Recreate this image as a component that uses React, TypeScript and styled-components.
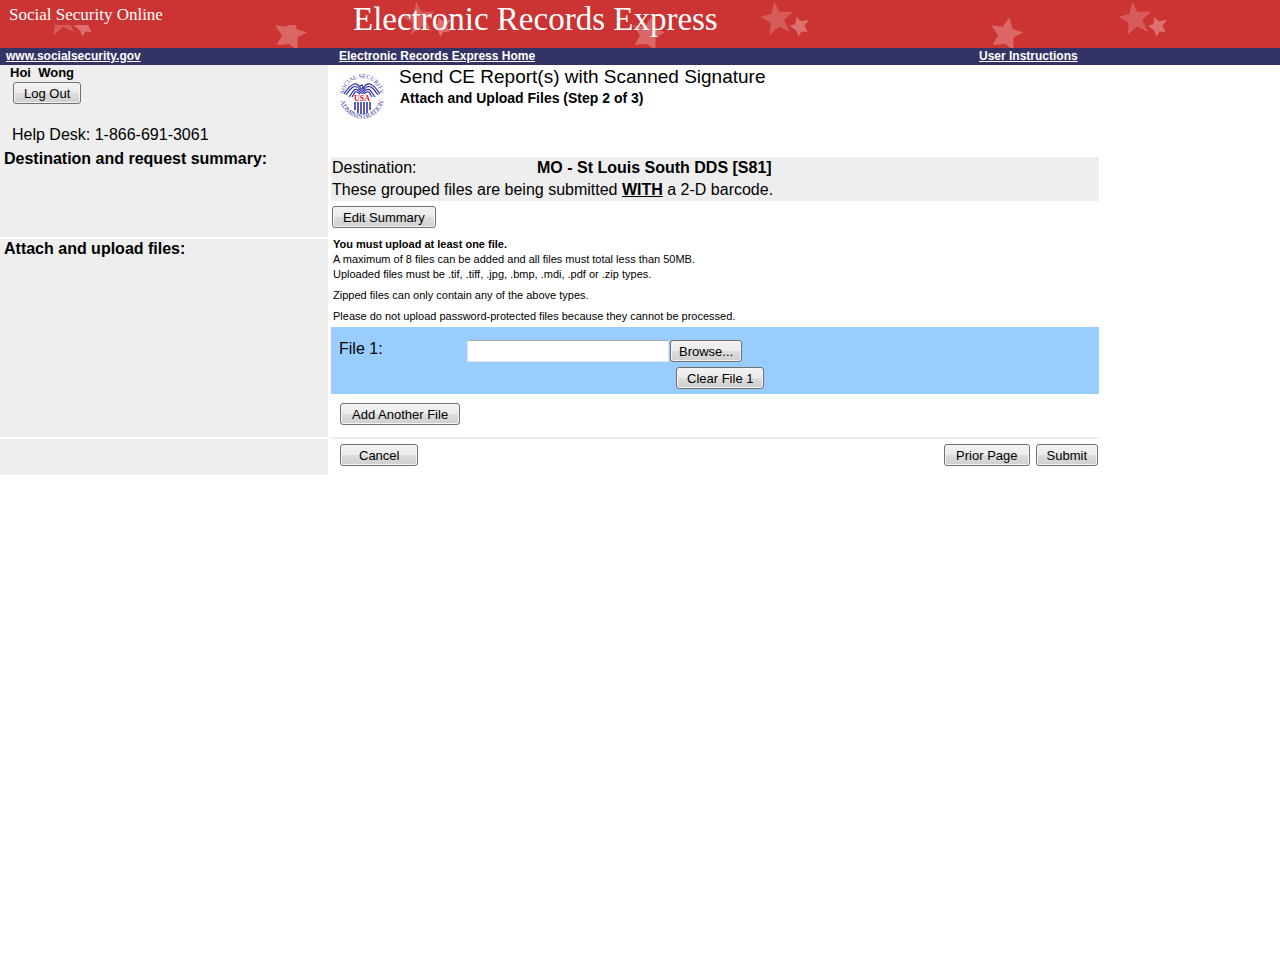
import React from "react";
import styled, { createGlobalStyle } from "styled-components";

const GlobalStyle = createGlobalStyle`
  * { box-sizing: border-box; }
  body {
    margin: 0;
    background: #ffffff;
    color: #000000;
    font-family: Arial, "Liberation Sans", sans-serif;
    font-size: 16px;
    line-height: 22px;
  }
  h1, h2, h3, p, dl, dd { margin: 0; }
`;

const Banner = styled.header`
  display: grid;
  grid-template-columns: 344px 1fr;
  align-items: start;
  height: 48px;
  background: #cc3333;
  color: #ffffff;
  font-family: Georgia, "Liberation Serif", serif;
`;

const StarField = styled.svg`
  grid-area: 1 / 1 / 2 / 3;
  width: 100%;
  height: 48px;
`;

const SiteName = styled.p`
  grid-area: 1 / 1;
  height: 25px;
  padding: 4px 0 0 9px;
  background: #cc3333;
  font-size: 17px;
  line-height: 21px;
`;

const AppName = styled.h1`
  grid-area: 1 / 2;
  padding-left: 9px;
  font-size: 33px;
  font-weight: 400;
  line-height: 39px;
`;

const NavBar = styled.nav`
  display: grid;
  grid-template-columns: 339px 640px 1fr;
  height: 17px;
  background: #333366;
  font-size: 12px;
  font-weight: 700;
  line-height: 16px;
`;

const NavLink = styled.a<{ $inset?: boolean }>`
  justify-self: start;
  margin-left: ${(p) => (p.$inset ? 6 : 0)}px;
  color: #ffffff;
`;

const Row = styled.section<{ $height: number }>`
  display: grid;
  grid-template-columns: 328px minmax(0, 60%);
  column-gap: 3px;
  min-height: ${(p) => p.$height}px;
`;

const Side = styled.div<{ $last?: boolean }>`
  background: #eeeeee;
  border-bottom: ${(p) => (p.$last ? 0 : 2)}px solid #ffffff;
`;

const SideHeading = styled.h3`
  padding-left: 4px;
  font-size: 16px;
  line-height: 20px;
`;

const Account = styled.div`
  display: flex;
  flex-direction: column;
  align-items: flex-start;
  height: 84px;
  padding: 0 0 3px 13px;
`;

const UserName = styled.p`
  margin: 0 0 1px -3px;
  font-size: 13px;
  font-weight: 700;
  line-height: 16px;
  white-space: pre;
`;

const HelpDesk = styled.p`
  margin: auto 0 0 -1px;
`;

const Main = styled.div<{ $ruled?: boolean }>`
  border-bottom: ${(p) => (p.$ruled ? 2 : 0)}px solid #eeeeee;
`;

const TitleBlock = styled.div`
  display: flex;
  gap: 14px;
  height: 92px;
  padding-left: 8px;
`;

const Seal = styled.svg`
  width: 46px;
  height: 48px;
  margin-top: 7px;
`;

const PageTitle = styled.h2`
  font-size: 19px;
  font-weight: 400;
  line-height: 24px;
`;

const StepTitle = styled.h3`
  padding-left: 1px;
  font-size: 14px;
  line-height: 18px;
`;

const Summary = styled.div`
  margin-bottom: 5px;
  padding-left: 1px;
  background: #eeeeee;
`;

const Destination = styled.dl`
  display: grid;
  grid-template-columns: 205px 1fr;
`;

const DestinationValue = styled.dd`
  font-weight: 700;
`;

const Emphasis = styled.strong`
  text-decoration: underline;
`;

const Button = styled.button<{ $pad?: number }>`
  height: 22px;
  padding: 1px ${(p) => p.$pad ?? 10}px 0;
  border: 1px solid #707070;
  border-radius: 3px;
  background: linear-gradient(#f2f2f2 0%, #ebebeb 50%, #dddddd 50%, #cfcfcf 100%);
  box-shadow: inset 0 0 0 1px #f4f4f4;
  color: #000000;
  font-family: inherit;
  font-size: 13px;
  line-height: 19px;
`;

const Indent = styled.div<{ $by: number }>`
  display: flex;
  padding-left: ${(p) => p.$by}px;
`;

const Rules = styled.div`
  display: flex;
  flex-direction: column;
  height: 88px;
  padding-left: 2px;
  font-size: 11px;
  line-height: 15px;
`;

const Rule = styled.p<{ $spaced?: boolean }>`
  margin-top: ${(p) => (p.$spaced ? 6 : 0)}px;
`;

const Notice = styled(Rule)`
  margin-bottom: 3px;
  line-height: 10px;
  font-weight: 700;
`;

const FilePanel = styled.div`
  display: grid;
  grid-template-columns: 128px 1fr;
  height: 67px;
  margin-bottom: 9px;
  padding: 13px 8px 0;
  background: #99ccff;
`;

const FileLabel = styled.label`
  line-height: 18px;
`;

const FileControls = styled.div`
  display: flex;
  flex-direction: column;
  gap: 5px;
`;

const FilePicker = styled.div`
  display: flex;
  gap: 1px;
`;

const FileBox = styled.input`
  width: 202px;
  height: 22px;
  padding: 1px 3px;
  border: 1px solid #e2e3ea;
  border-top-color: #abadb3;
  background: #ffffff;
  font: inherit;
  font-size: 13px;
`;

const Actions = styled.div`
  display: flex;
  gap: 6px;
  padding: 5px 1px 0 9px;
`;

const Spacer = styled.span`
  flex: 1;
`;

function Stars() {
  return (
    <StarField aria-hidden="true">
      <defs>
        <pattern id="stars" x="14" y="0" width="358" height="48" patternUnits="userSpaceOnUse">
          <g transform="scale(0.33333)">
            <path fill="#d65c5c" d="M133 5L148 35L189 35L162 61L180 95L147 80L118 105L123 69L91 51L124 41Z" />
            <path fill="#e07070" d="M199 52L213 64L237 59L223 78L233 95L214 95L205 110L199 92L180 77L196 73Z" />
            <path fill="#db6666" d="M838 52L848 88L880 97L851 112L850 150L825 132L788 135L804 106L783 76L818 80Z" />
          </g>
        </pattern>
      </defs>
      <rect width="100%" height="48" fill="url(#stars)" />
    </StarField>
  );
}

function AgencySeal() {
  return (
    <Seal viewBox="0 0 46 48" role="img" aria-label="Social Security Administration seal">
      <defs>
        <path id="sealTop" d="M5 24A18 18 0 0 1 41 24" />
        <path id="sealBottom" d="M0.5 24A22.5 22.5 0 0 0 45.5 24" />
      </defs>
      <g fill="#3c3ca6" fontFamily="Liberation Serif, serif">
        <text fontSize="6">
          <textPath href="#sealTop" startOffset="50%" textAnchor="middle">SOCIAL SECURITY</textPath>
        </text>
        <text fontSize="7">
          <textPath href="#sealBottom" startOffset="50%" textAnchor="middle">ADMINISTRATION</textPath>
        </text>
      </g>
      <g fill="none" stroke="#2929a3" strokeWidth="1.2">
        <path d="M22 17Q19 11 15 12Q10 14 5 22" />
        <path d="M22 19Q18 13 14 15Q11 17 7 23" />
        <path d="M22 21Q18 16 15 18L10 25" />
        <path d="M21 22Q18 19 16 20L13 25" />
        <path d="M24 17Q27 11 31 12Q36 14 41 22" />
        <path d="M24 19Q28 13 32 15Q35 17 39 23" />
        <path d="M24 21Q28 16 31 18L36 25" />
        <path d="M25 22Q28 19 30 20L33 25" />
        <path d="M21 14L23 13L24 15L23 17V22" />
        <path strokeWidth="1.5" d="M16 30V38M19 30V41M22 30V42M25 30V42M28 30V41M31 30V38" />
      </g>
      <text x="23" y="29" textAnchor="middle" fill="#dd1133" fontFamily="Liberation Serif, serif" fontSize="8" fontWeight="700">
        USA
      </text>
    </Seal>
  );
}

export default function App() {
  return (
    <>
      <GlobalStyle />
      <Banner>
        <Stars />
        <SiteName>Social Security Online</SiteName>
        <AppName>Electronic Records Express</AppName>
      </Banner>
      <NavBar>
        <NavLink href="#ssa" $inset>www.socialsecurity.gov</NavLink>
        <NavLink href="#home">Electronic Records Express Home</NavLink>
        <NavLink href="#instructions">User Instructions</NavLink>
      </NavBar>
      <main>
        <Row $height={174}>
          <Side>
            <Account>
              <UserName>Hoi  Wong</UserName>
              <Button type="button">Log Out</Button>
              <HelpDesk>Help Desk: 1-866-691-3061</HelpDesk>
            </Account>
            <SideHeading>Destination and request summary:</SideHeading>
          </Side>
          <Main>
            <TitleBlock>
              <AgencySeal />
              <div>
                <PageTitle>Send CE Report(s) with Scanned Signature</PageTitle>
                <StepTitle>Attach and Upload Files (Step 2 of 3)</StepTitle>
              </div>
            </TitleBlock>
            <Summary>
              <Destination>
                <dt>Destination:</dt>
                <DestinationValue>MO - St Louis South DDS [S81]</DestinationValue>
              </Destination>
              <p>
                These grouped files are being submitted <Emphasis>WITH</Emphasis> a 2-D barcode.
              </p>
            </Summary>
            <Indent $by={1}>
              <Button type="button">Edit Summary</Button>
            </Indent>
          </Main>
        </Row>
        <Row $height={200}>
          <Side>
            <SideHeading>Attach and upload files:</SideHeading>
          </Side>
          <Main $ruled>
            <Rules>
              <Notice>You must upload at least one file.</Notice>
              <Rule>A maximum of 8 files can be added and all files must total less than 50MB.</Rule>
              <Rule>Uploaded files must be .tif, .tiff, .jpg, .bmp, .mdi, .pdf or .zip types.</Rule>
              <Rule $spaced>Zipped files can only contain any of the above types.</Rule>
              <Rule $spaced>Please do not upload password-protected files because they cannot be processed.</Rule>
            </Rules>
            <FilePanel>
              <FileLabel htmlFor="file1">File 1:</FileLabel>
              <FileControls>
                <FilePicker>
                  <FileBox id="file1" type="text" />
                  <Button type="button" $pad={8}>Browse...</Button>
                </FilePicker>
                <Indent $by={209}>
                  <Button type="button">Clear File 1</Button>
                </Indent>
              </FileControls>
            </FilePanel>
            <Indent $by={9}>
              <Button type="button" $pad={11}>Add Another File</Button>
            </Indent>
          </Main>
        </Row>
        <Row $height={36}>
          <Side $last />
          <Main>
            <Actions>
              <Button type="button" $pad={18}>Cancel</Button>
              <Spacer />
              <Button type="button" $pad={11}>Prior Page</Button>
              <Button type="submit">Submit</Button>
            </Actions>
          </Main>
        </Row>
      </main>
    </>
  );
}
